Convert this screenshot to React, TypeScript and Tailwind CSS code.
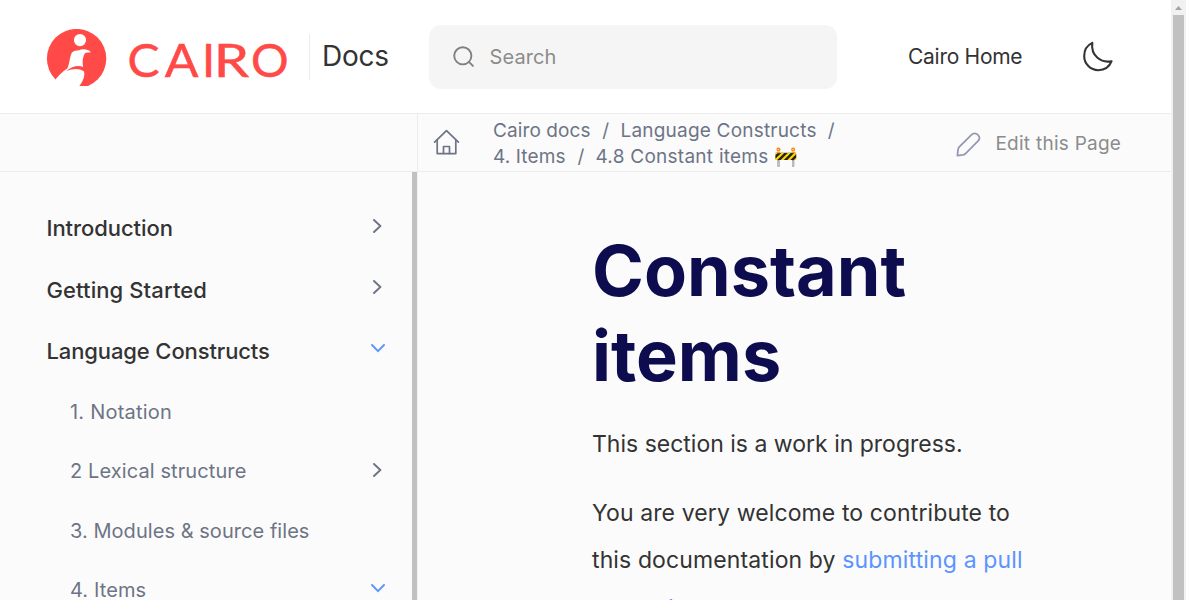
import React from "react";

function Logo() {
  return (
    <div className="flex h-[60px] w-[242px] shrink-0 items-start">
      <svg width="242" height="57" viewBox="0 0 242 57" aria-label="CAIRO">
        <circle cx="30.6" cy="29.6" r="29.7" fill="#ff4a48" />
        <path
          fill="#fff"
          d="M7.2 53.6C11.5 47.5 16 43 21.2 39.6C23.8 35 23.4 28.5 25.8 23.8C27.6 21.4 30.6 21.6 33.2 21.3C36 19.8 42.2 19.8 44.8 23.2C42.3 23.4 40.3 23.6 39 24.2C36.8 27 36 33.5 37.2 38C32 35.8 25.5 37.5 20.2 42.2C27 39.5 33 39.3 37.8 42.3C39.5 46.5 37 52 33 57.5H6Z"
        />
        <circle cx="34" cy="11.1" r="6.1" fill="#fff" />
        <g fill="#ff4a48" stroke="#ff4a48" strokeWidth="0.5" fontSize="47" className="font-['Lato',sans-serif]">
          <text transform="translate(81.5 48) scale(1.02 1)">C</text>
          <text transform="translate(118.8 48) scale(1.06 1)">A</text>
          <text x="156" y="48">
            I
          </text>
          <text transform="translate(167.8 48) scale(1.2 1)">R</text>
          <text x="205" y="48">
            O
          </text>
        </g>
      </svg>
    </div>
  );
}

function Chevron({ open }: { open?: boolean }) {
  return open ? (
    <svg width="14" height="9" viewBox="0 0 14 9" fill="none">
      <path d="M1 1l6 6.2L13 1" stroke="#5c94ff" strokeWidth="1.9" strokeLinecap="round" strokeLinejoin="round" />
    </svg>
  ) : (
    <svg width="9" height="14" viewBox="0 0 9 14" fill="none" className="mr-[3px]">
      <path d="M1 1l6.4 6L1 13" stroke="#6d7486" strokeWidth="1.9" strokeLinecap="round" strokeLinejoin="round" />
    </svg>
  );
}

const sections = [
  { label: "Introduction", open: false, tracking: "tracking-[-0.07px]" },
  { label: "Getting Started", open: false, tracking: "tracking-[0.1px]" },
  { label: "Language Constructs", open: true, tracking: "tracking-[-0.12px]" },
];

const pages: { label: string; toggle?: "open" | "closed"; tracking: string }[] = [
  { label: "1. Notation", tracking: "tracking-[0.22px]" },
  { label: "2 Lexical structure", toggle: "closed", tracking: "tracking-[0.1px]" },
  { label: "3. Modules & source files", tracking: "tracking-[0.05px]" },
  { label: "4. Items", toggle: "open", tracking: "tracking-[0.1px]" },
];

function Header() {
  return (
    <header className="flex h-[113px] shrink-0 items-start bg-white pl-[46px]">
      <div className="pt-[29px]">
        <Logo />
      </div>
      <div className="ml-[21px] mt-[34px] flex h-[46px] w-[120px] items-center border-l border-[#ececec] pb-[2px] pl-3 text-[28px] tracking-[-0.25px] text-[#333]">
        Docs
      </div>
      <div className="mt-[25px] flex h-16 w-[408px] items-center rounded-xl bg-[#f5f5f5] pl-6 text-[20px] text-[#8c8c8c]">
        <svg width="22" height="22" viewBox="0 0 22 22" fill="none" stroke="#808080" strokeWidth="1.9" strokeLinecap="round">
          <circle cx="9.8" cy="9.8" r="8.6" />
          <path d="M15.9 15.9l4 4" />
        </svg>
        <span className="ml-[14.5px] tracking-[0.1px]">Search</span>
      </div>
      <div className="ml-[71px] mt-[40px] w-[173px] text-[21px] leading-[33px] tracking-[-0.28px] text-[#333]">Cairo Home</div>
      <svg width="33" height="33" viewBox="0 0 33 33" fill="none" className="mt-[40px]">
        <path
          d="M11.3 2.9C5.8 5.5 3.2 10.5 3.2 16C3.2 24 9.5 30.2 17.3 30.2C23.5 30.2 28.5 26.5 30.6 21.2C20.5 23.5 9.5 16 11.3 2.9Z"
          stroke="#333"
          strokeWidth="2.1"
          strokeLinejoin="round"
        />
      </svg>
    </header>
  );
}

function Toolbar() {
  return (
    <div className="flex h-[59px] shrink-0 border-y border-[#ececec] bg-[#fbfbfb] text-[19px] text-[#6d7486]">
      <div className="w-[418px] shrink-0 border-r border-[#ececec]" />
      <div className="flex w-[75px] shrink-0 items-start pl-[15px] pt-[15px]">
        <svg width="27" height="27" viewBox="0 0 27 27" fill="none" stroke="#6d7486" strokeWidth="1.7" strokeLinecap="round" strokeLinejoin="round">
          <path d="M1.6 13.2L13.5 1.7L25.4 13.2" />
          <path d="M4.2 11V24.6H22.8V11" />
          <path d="M10.5 24.4V17.5H16.5V24.4" />
        </svg>
      </div>
      <div className="w-[463px] shrink-0 pt-1 leading-[26px]">
        <div className="flex whitespace-pre">
          <span className="tracking-[0.1px]">Cairo docs</span>
          <span className="ml-[11.5px] mr-[11.5px]">/</span>
          <span className="tracking-[0.2px]">Language Constructs</span>
          <span className="ml-[11px]">/</span>
        </div>
        <div className="flex whitespace-pre">
          <span className="tracking-[0.12px]">4. Items</span>
          <span className="ml-3 mr-[11px]">/</span>
          <span className="tracking-[0.26px]">4.8 Constant items 🚧</span>
        </div>
      </div>
      <svg width="26" height="26" viewBox="0 0 26 26" fill="none" className="mt-[18px] shrink-0">
        <path
          d="M1.4 23.6L2 17.8C2.2 16.4 2.5 15.7 3.3 14.9L15.4 2.8C17.3 .9 20 .9 21.9 2.8C23.8 4.7 23.8 7.2 21.9 9.1L9.8 21.4C8.9 22.3 8.2 22.7 7 22.9Z"
          stroke="#9496b0"
          strokeWidth="1.7"
          strokeLinejoin="round"
        />
      </svg>
      <span className="ml-[13.4px] mt-4 whitespace-nowrap leading-7 tracking-[0.26px] text-[#8c8c8c]">Edit this Page</span>
    </div>
  );
}

function Sidebar() {
  return (
    <aside className="flex w-[418px] shrink-0 border-r border-[#f1f1f1]">
      <nav className="w-[412px] shrink-0 pl-[46px] pr-[27px] pt-[26px]">
        {sections.map((s) => (
          <div key={s.label} className="flex h-[61.4px] items-center justify-between pl-[0.5px] text-[22px] font-medium text-[#333]">
            <span className={s.tracking}>{s.label}</span>
            <span className="mb-[6px]">
              <Chevron open={s.open} />
            </span>
          </div>
        ))}
        {pages.map((p) => (
          <div key={p.label} className="flex h-[59.4px] items-center justify-between pl-6 text-[20px] text-[#6d7486]">
            <span className={p.tracking}>{p.label}</span>
            {p.toggle && (
              <span className="mb-[2.5px]">
                <Chevron open={p.toggle === "open"} />
              </span>
            )}
          </div>
        ))}
      </nav>
      <div className="w-[5px] shrink-0 bg-[#c1c1c1]" />
    </aside>
  );
}

export default function App() {
  return (
    <div className="flex h-[600px] w-[1186px] overflow-hidden bg-[#fbfbfb] font-['Inter',sans-serif]">
      <div className="flex w-[1171px] shrink-0 flex-col overflow-hidden">
        <Header />
        <Toolbar />
        <div className="flex min-h-0 flex-1 overflow-hidden">
          <Sidebar />
          <main className="w-[640px] pl-[174px] pt-[56px]">
            <h1 className="w-[440px] text-[70.2px] font-bold leading-[85px] text-[#0c0c4f]">Constant items</h1>
            <p className="mt-[23px] text-[23px] leading-[47px] text-[#333]">This section is a work in progress.</p>
            <p className="mt-[22.4px] w-[440px] text-[23px] leading-[46.6px] tracking-[0.12px] text-[#333]">
              You are very welcome to contribute to this documentation by{" "}
              <a className="tracking-[0.15px] text-[#5c94ff]">submitting a pull request</a>.
            </p>
          </main>
        </div>
      </div>
      <div className="flex w-[15px] shrink-0 flex-col items-center bg-[#f1f1f1]">
        <svg width="15" height="15" viewBox="0 0 15 15">
          <path d="M4 10L7.5 6L11 10Z" fill="#a3a3a3" />
        </svg>
        <div className="w-[11px] flex-1 bg-[#c1c1c1]" />
      </div>
    </div>
  );
}
